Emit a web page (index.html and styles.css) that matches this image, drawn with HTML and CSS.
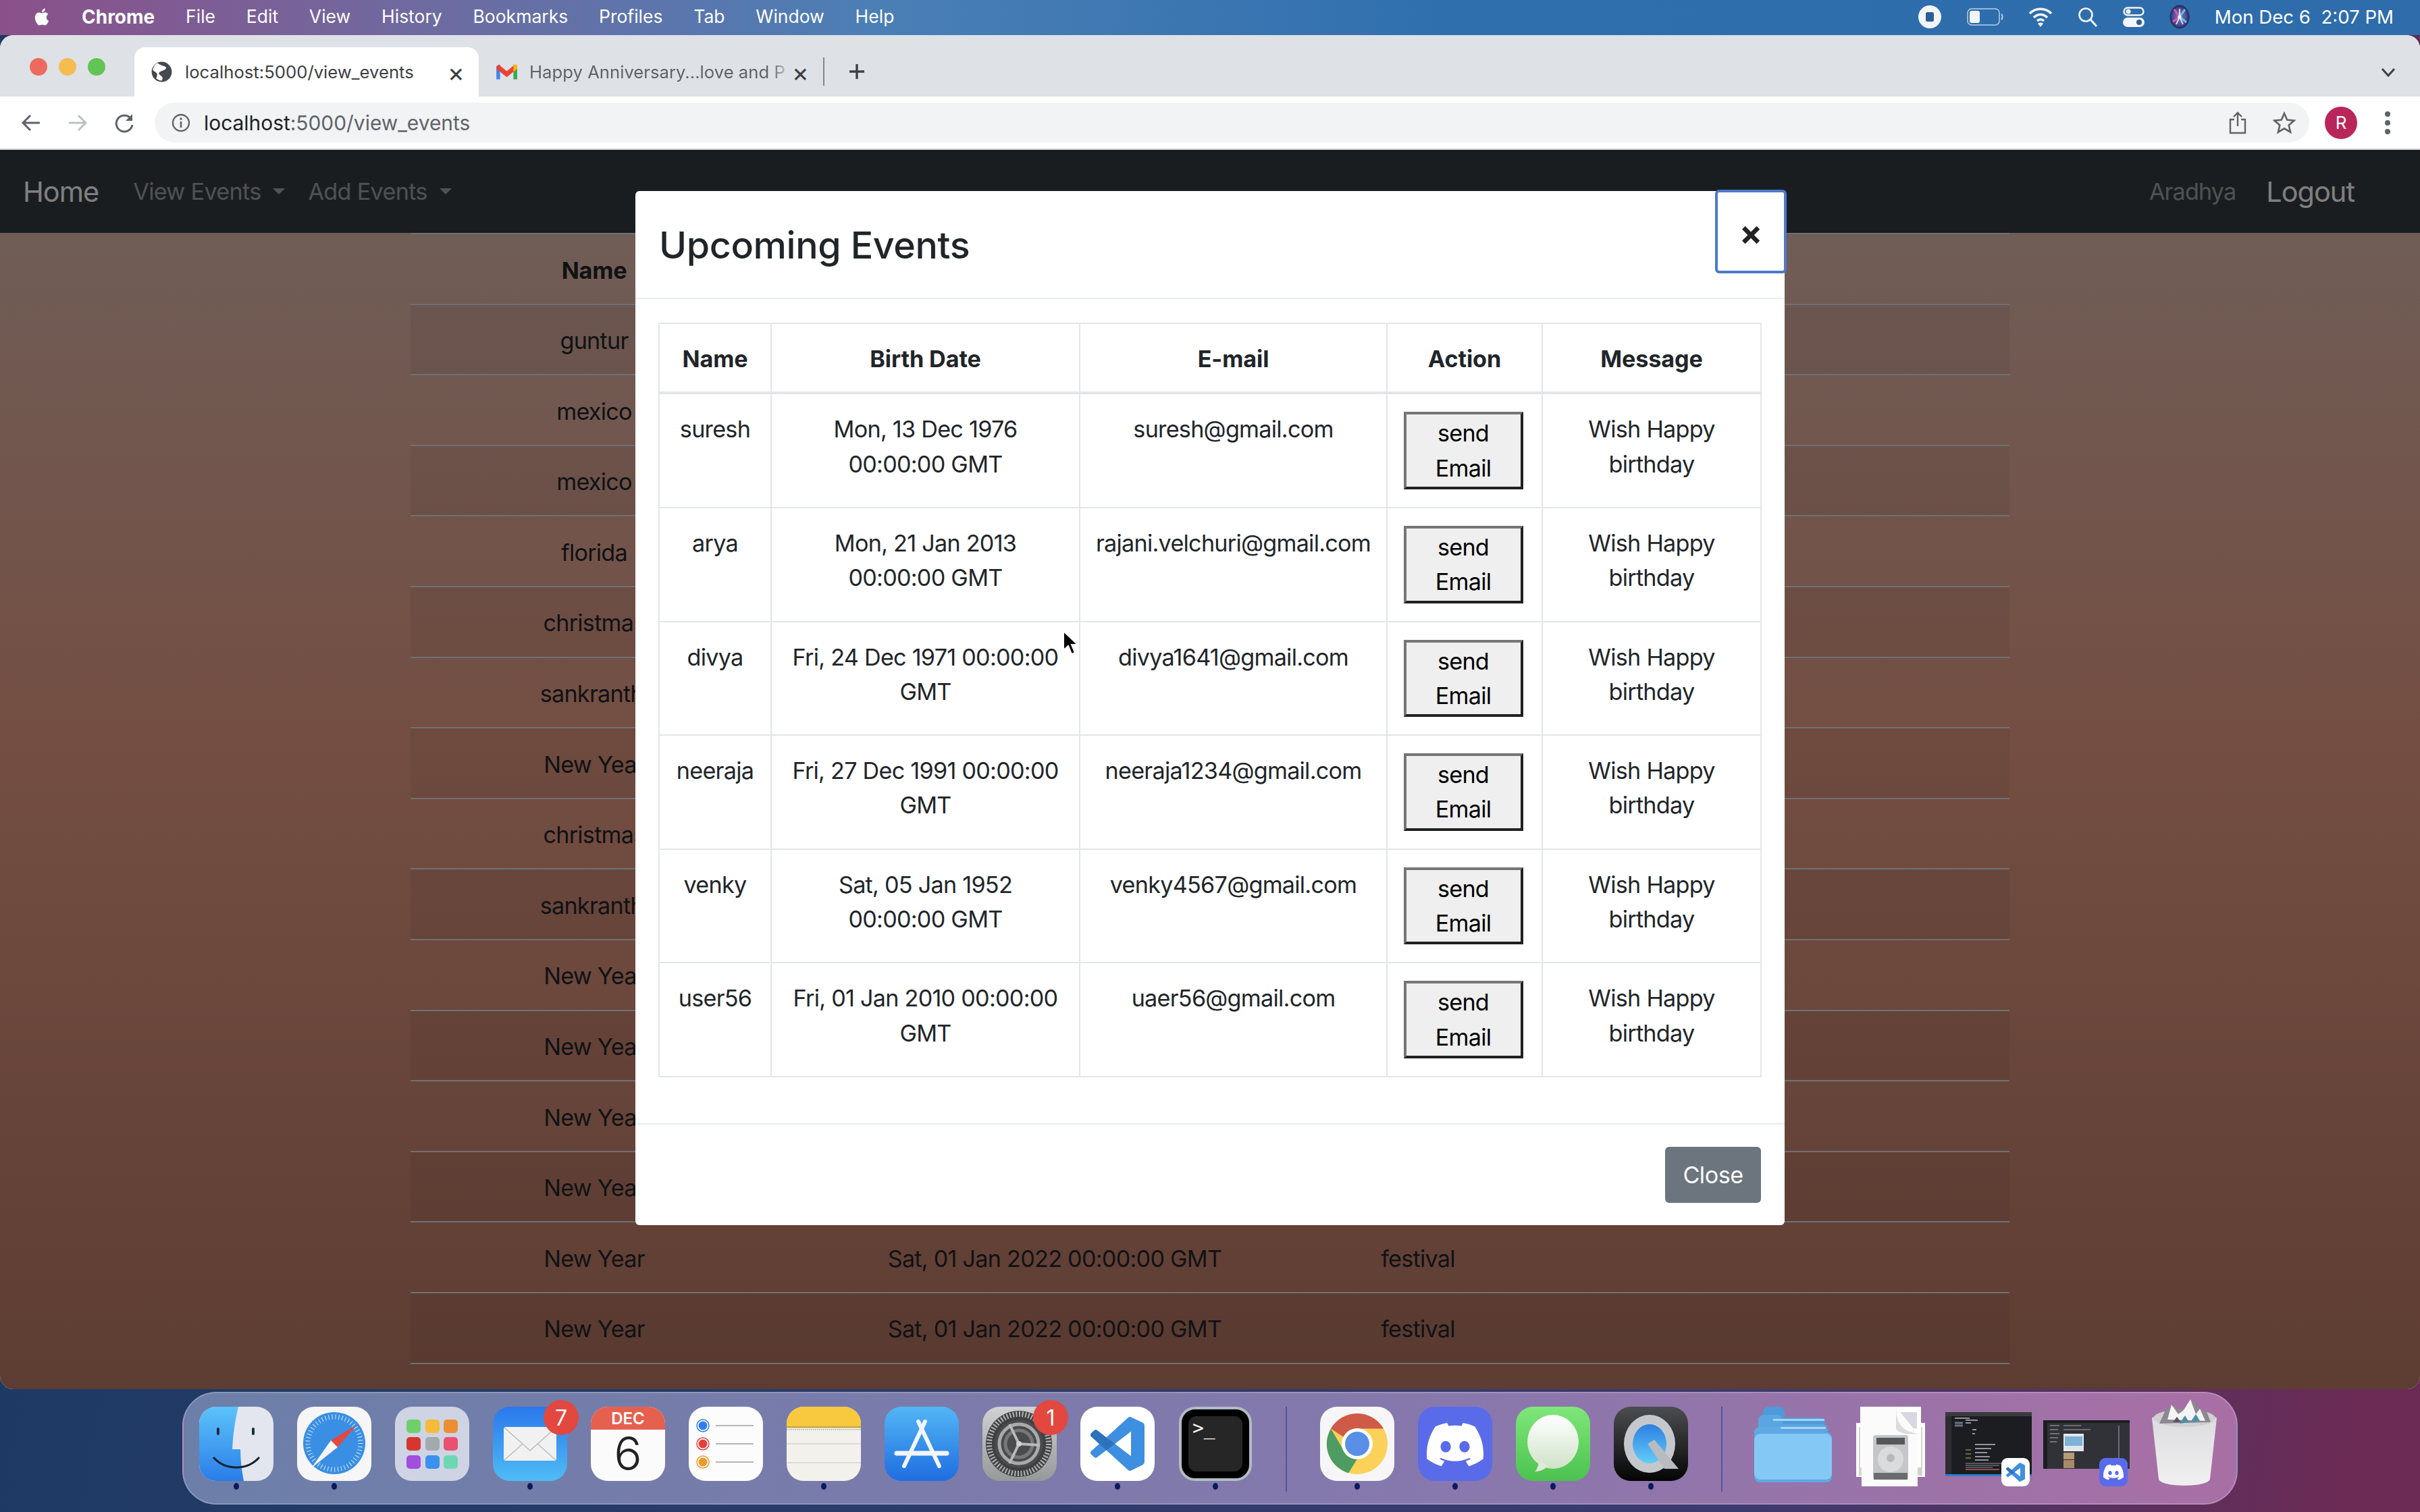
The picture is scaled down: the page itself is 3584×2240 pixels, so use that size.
FILE: index.html
```html
<!DOCTYPE html>
<html lang="en">
<head>
    <meta charset="UTF-8">
    <title>localhost:5000/view_events</title>
    <link rel="stylesheet" href="styles.css">
</head>
<body>
    <!-- shared icons -->
    <svg class="defs" width="0" height="0">
        <symbol id="discord-logo" viewBox="0 0 24 24">
            <path fill="#fff" d="M20.317 4.3698a19.7913 19.7913 0 00-4.8851-1.5152.0741.0741 0 00-.0785.0371c-.211.3753-.4447.8648-.6083 1.2495-1.8447-.2762-3.68-.2762-5.4868 0-.1636-.3933-.4058-.8742-.6177-1.2495a.077.077 0 00-.0785-.037 19.7363 19.7363 0 00-4.8852 1.515.0699.0699 0 00-.0321.0277C.5334 9.0458-.319 13.5799.0992 18.0578a.0824.0824 0 00.0312.0561c2.0528 1.5076 4.0413 2.4228 5.9929 3.0294a.0777.0777 0 00.0842-.0276c.4616-.6304.8731-1.2952 1.226-1.9942a.076.076 0 00-.0416-.1057c-.6528-.2476-1.2743-.5495-1.8722-.8923a.077.077 0 01-.0076-.1277c.1258-.0943.2517-.1923.3718-.2914a.0743.0743 0 01.0776-.0105c3.9278 1.7933 8.18 1.7933 12.0614 0a.0739.0739 0 01.0785.0095c.1202.099.246.1981.3728.2924a.077.077 0 01-.0066.1276 12.2986 12.2986 0 01-1.873.8914.0766.0766 0 00-.0407.1067c.3604.698.7719 1.3628 1.225 1.9932a.076.076 0 00.0842.0286c1.961-.6067 3.9495-1.5219 6.0023-3.0294a.077.077 0 00.0313-.0552c.5004-5.177-.8382-9.6739-3.5485-13.6604a.061.061 0 00-.0312-.0286zM8.02 15.3312c-1.1825 0-2.1569-1.0857-2.1569-2.419 0-1.3332.9555-2.4189 2.157-2.4189 1.2108 0 2.1757 1.0952 2.1568 2.419 0 1.3332-.9555 2.4189-2.1569 2.4189zm7.9748 0c-1.1825 0-2.1569-1.0857-2.1569-2.419 0-1.3332.9554-2.4189 2.1569-2.4189 1.2108 0 2.1757 1.0952 2.1568 2.419 0 1.3332-.946 2.4189-2.1568 2.4189Z"/>
        </symbol>
        <symbol id="code-logo" viewBox="0 0 24 24">
            <path fill="#3f8fe0" d="M23.15 2.587L18.21.21a1.494 1.494 0 0 0-1.705.29l-9.46 8.63-4.12-3.128a.999.999 0 0 0-1.276.057L.327 7.261A1 1 0 0 0 .326 8.74L3.899 12 .326 15.26a1 1 0 0 0 .001 1.479L1.65 17.94a.999.999 0 0 0 1.276.057l4.12-3.128 9.46 8.63a1.492 1.492 0 0 0 1.704.29l4.942-2.377A1.5 1.5 0 0 0 24 20.06V3.939a1.5 1.5 0 0 0-.85-1.352zm-5.146 14.861L10.826 12l7.178-5.448v10.896z"/>
            <path fill="#2a6fb8" d="M7.045 9.13l-4.12-3.128a.999.999 0 0 0-1.276.057L.327 7.261A1 1 0 0 0 .326 8.74L3.899 12l3.146 2.87L10.826 12z" opacity=".9"/>
        </symbol>
    </svg>

    <!-- mac menu bar -->
    <header class="menubar">
        <svg class="apple" viewBox="0 0 24 24"><path fill="#fff" d="M18.71 19.5c-.83 1.24-1.71 2.45-3.05 2.47-1.34.03-1.77-.79-3.29-.79-1.53 0-2 .77-3.27.82-1.31.05-2.3-1.32-3.14-2.53C4.25 17 2.94 12.45 4.7 9.39c.87-1.52 2.43-2.48 4.12-2.51 1.28-.02 2.5.87 3.29.87.78 0 2.26-1.07 3.81-.91.65.03 2.47.26 3.64 1.98-.09.06-2.17 1.28-2.15 3.81.03 3.02 2.65 4.03 2.68 4.04-.03.07-.42 1.44-1.38 2.83M13 3.5c.73-.83 1.94-1.46 2.94-1.5.13 1.17-.34 2.35-1.04 3.19-.69.85-1.83 1.51-2.95 1.42-.15-1.15.41-2.35 1.05-3.11z"/></svg>
        <nav class="menu">
            <span class="menu-app">Chrome</span>
            <span>File</span>
            <span>Edit</span>
            <span>View</span>
            <span>History</span>
            <span>Bookmarks</span>
            <span>Profiles</span>
            <span>Tab</span>
            <span>Window</span>
            <span>Help</span>
        </nav>
        <div class="status">
            <svg width="36" height="36" viewBox="0 0 36 36"><circle cx="18" cy="18" r="17" fill="#f2f5f9"/><rect x="12" y="11" width="12" height="14" rx="2.5" fill="#2b5e94"/></svg>
            <svg width="54" height="26" viewBox="0 0 54 26"><rect x="1" y="1" width="47" height="24" rx="6" fill="none" stroke="#b8cfe6" stroke-width="1.5"/><rect x="4" y="4" width="15" height="18" rx="3" fill="#f2f5f9"/><path d="M51 9c2 1 2 7 0 8" fill="none" stroke="#b8cfe6" stroke-width="2"/></svg>
            <svg width="36" height="30" viewBox="0 0 36 30"><path d="M2 10c9-9 23-9 32 0M8 16c6-6 14-6 20 0M13 21c3-3 7-3 10 0" fill="none" stroke="#f2f5f9" stroke-width="3.5"/><path d="M18 30l-4-5c2-2 6-2 8 0z" fill="#f2f5f9"/></svg>
            <svg width="30" height="30" viewBox="0 0 30 30"><circle cx="12" cy="12" r="9.5" fill="none" stroke="#f2f5f9" stroke-width="2.6"/><path d="M19 19l9 10" stroke="#f2f5f9" stroke-width="3"/></svg>
            <svg width="32" height="30" viewBox="0 0 32 30"><rect x="1.5" y="1.5" width="29" height="11" rx="5.5" fill="none" stroke="#f2f5f9" stroke-width="2.4"/><circle cx="8" cy="7" r="3.6" fill="#f2f5f9"/><rect x="0" y="16" width="32" height="14" rx="7" fill="#f2f5f9"/><circle cx="24" cy="23" r="4" fill="#2b5e94"/></svg>
            <svg width="30" height="36" viewBox="0 0 30 36"><defs><radialGradient id="sr"><stop offset="0" stop-color="#8f6fd0"/><stop offset=".7" stop-color="#4d4a9c"/><stop offset="1" stop-color="#23264a"/></radialGradient></defs><ellipse cx="15" cy="18" rx="14.500" ry="17.500" fill="url(#sr)"/><path d="M15 18L7 7M15 18L5 25" stroke="#d85aa8" stroke-width="3"/><path d="M15 18L23 7M15 18l10 8" stroke="#58c8e0" stroke-width="3"/><path d="M15 18V6M15 18l-5 11M15 18l5 11" stroke="#e6f4ff" stroke-width="1.800"/><circle cx="15" cy="18" r="2.500" fill="#fff"/></svg>
            <span class="clock">Mon Dec 6&nbsp;&nbsp;2:07 PM</span>
        </div>
    </header>

    <!-- browser window -->
    <main class="window">
        <div class="tabstrip">
            <div class="lights">
                <i class="light red"></i>
                <i class="light yellow"></i>
                <i class="light green"></i>
            </div>
            <div class="tab tab-active">
                <svg class="favicon" viewBox="0 0 26 26"><circle cx="13" cy="13" r="12.5" fill="#45484d"/><path d="M8 2c3 3 8 3 10 5s-2 4-5 5-5 3-2 5 4 4 2 7c-2 0-5-1-7-3 2-3 2-6-1-8-2-1-3-2-3-3 1-4 3-7 6-8z" fill="#fff"/></svg>
                <span class="tab-title">localhost:5000/view_events</span>
                <span class="tab-x">×</span>
            </div>
            <div class="tab">
                <svg class="favicon favicon-mail" viewBox="0 0 30 24"><path d="M1 22V5l5-3v20z" fill="#4285f4"/><path d="M29 22V5l-5-3v20z" fill="#34a853"/><path d="M1 5l3-3 11 9 11-9 3 3v3L15 19 1 8z" fill="#ea4335"/><path d="M24 3l5-1v6l-5 4z" fill="#fbbc04"/></svg>
                <span class="tab-title tab-fade">Happy Anniversary...love and P</span>
                <span class="tab-x">×</span>
            </div>
            <i class="tab-divider"></i>
            <svg class="plus" width="28" height="28" viewBox="0 0 28 28"><path d="M14 3v22M3 14h22" stroke="#3c4043" stroke-width="3.4"/></svg>
            <svg class="chevron" width="24" height="16" viewBox="0 0 24 16"><path d="M3 3l9 10 9-10" fill="none" stroke="#3c4043" stroke-width="3"/></svg>
        </div>

        <div class="toolbar">
            <svg class="tool" width="30" height="30" viewBox="0 0 30 30"><path d="M28 15H4M14 4L3 15l11 11" fill="none" stroke="#5f6368" stroke-width="3"/></svg>
            <svg class="tool" width="30" height="30" viewBox="0 0 30 30"><path d="M2 15h24M16 4l11 11-11 11" fill="none" stroke="#bdc1c6" stroke-width="3"/></svg>
            <svg class="tool" width="30" height="30" viewBox="0 0 30 30"><path d="M25 9a12 12 0 1 0 2 9" fill="none" stroke="#5f6368" stroke-width="3"/><path d="M27 2v10H17z" fill="#5f6368"/></svg>
            <div class="omnibox">
                <svg width="28" height="28" viewBox="0 0 28 28"><circle cx="14" cy="14" r="12" fill="none" stroke="#5f6368" stroke-width="2.4"/><path d="M14 12v9" stroke="#5f6368" stroke-width="2.6"/><circle cx="14" cy="8" r="1.8" fill="#5f6368"/></svg>
                <span class="url"><b>localhost</b>:5000/view_events</span>
                <svg class="omni-share" width="26" height="34" viewBox="0 0 26 34"><path d="M8 12H2v20h22V12h-6M13 22V2M7 8l6-6 6 6" fill="none" stroke="#5f6368" stroke-width="2.4"/></svg>
                <svg class="omni-star" width="34" height="34" viewBox="0 0 34 34"><path d="M17 3l4.200 9.600 10.400 1-7.900 6.900 2.400 10.200L17 25.300 7.900 30.700l2.400-10.200-7.900-6.900 10.400-1z" fill="none" stroke="#5f6368" stroke-width="2.600"/></svg>
            </div>
            <span class="avatar">R</span>
            <span class="kebab"><i></i><i></i><i></i></span>
        </div>

        <section class="page">
            <nav class="navbar">
                <a class="brand">Home</a>
                <a class="nav-link caret">View Events</a>
                <a class="nav-link caret">Add Events</a>
                <span class="nav-user">Aradhya</span>
                <a class="nav-logout">Logout</a>
            </nav>

            <table class="events">
                <thead>
                    <tr><th class="c-name">Name</th><th class="c-date"></th><th class="c-kind"></th><th></th></tr>
                </thead>
                <tbody>
                    <tr><td>guntur</td><td></td><td></td><td></td></tr>
                    <tr><td>mexico</td><td></td><td></td><td></td></tr>
                    <tr><td>mexico</td><td></td><td></td><td></td></tr>
                    <tr><td>florida</td><td></td><td></td><td></td></tr>
                    <tr><td>christmas</td><td></td><td></td><td></td></tr>
                    <tr><td>sankranthi</td><td></td><td></td><td></td></tr>
                    <tr><td>New Year</td><td></td><td></td><td></td></tr>
                    <tr><td>christmas</td><td></td><td></td><td></td></tr>
                    <tr><td>sankranthi</td><td></td><td></td><td></td></tr>
                    <tr><td>New Year</td><td></td><td></td><td></td></tr>
                    <tr><td>New Year</td><td></td><td></td><td></td></tr>
                    <tr><td>New Year</td><td></td><td></td><td></td></tr>
                    <tr><td>New Year</td><td></td><td></td><td></td></tr>
                    <tr><td>New Year</td><td>Sat, 01 Jan 2022 00:00:00 GMT</td><td>festival</td><td></td></tr>
                    <tr><td>New Year</td><td>Sat, 01 Jan 2022 00:00:00 GMT</td><td>festival</td><td></td></tr>
                </tbody>
            </table>

            <div class="backdrop"></div>

            <div class="modal">
                <div class="modal-header">
                    <h4>Upcoming Events</h4>
                    <button class="modal-x">×</button>
                </div>
                <div class="modal-body">
                    <table class="upcoming">
                        <thead>
                            <tr><th class="u-name">Name</th><th class="u-date">Birth Date</th><th class="u-mail">E-mail</th><th class="u-act">Action</th><th>Message</th></tr>
                        </thead>
                        <tbody>
                            <tr><td>suresh</td><td>Mon, 13 Dec 1976 00:00:00 GMT</td><td>suresh@gmail.com</td><td><button class="send">send Email</button></td><td>Wish Happy birthday</td></tr>
                            <tr><td>arya</td><td>Mon, 21 Jan 2013 00:00:00 GMT</td><td>rajani.velchuri@gmail.com</td><td><button class="send">send Email</button></td><td>Wish Happy birthday</td></tr>
                            <tr><td>divya</td><td>Fri, 24 Dec 1971 00:00:00 GMT</td><td>divya1641@gmail.com</td><td><button class="send">send Email</button></td><td>Wish Happy birthday</td></tr>
                            <tr><td>neeraja</td><td>Fri, 27 Dec 1991 00:00:00 GMT</td><td>neeraja1234@gmail.com</td><td><button class="send">send Email</button></td><td>Wish Happy birthday</td></tr>
                            <tr><td>venky</td><td>Sat, 05 Jan 1952<br>00:00:00 GMT</td><td>venky4567@gmail.com</td><td><button class="send">send Email</button></td><td>Wish Happy birthday</td></tr>
                            <tr><td>user56</td><td>Fri, 01 Jan 2010 00:00:00 GMT</td><td>uaer56@gmail.com</td><td><button class="send">send Email</button></td><td>Wish Happy birthday</td></tr>
                        </tbody>
                    </table>
                </div>
                <div class="modal-footer">
                    <button class="close-btn">Close</button>
                </div>
            </div>

            <svg class="cursor" width="24" height="38" viewBox="0 0 24 38"><path d="M2 2v28l7-6 5 12 5-2-5-12h9z" fill="#000" stroke="#fff" stroke-width="2"/></svg>
        </section>
    </main>

    <!-- dock -->
    <footer class="dock">
        <div class="dock-item running">
            <svg class="icon" viewBox="0 0 110 110"><defs><linearGradient id="fa" x1="0" y1="0" x2="0" y2="1"><stop offset="0" stop-color="#5cc3fa"/><stop offset="1" stop-color="#2a7de8"/></linearGradient></defs><rect width="110" height="110" rx="25" fill="#e3e6ee"/><path d="M25 0h33c-5 20-8 42-9 63h12c0 16 2 32 5 47H25A25 25 0 0 1 0 85V25A25 25 0 0 1 25 0z" fill="url(#fa)"/><rect x="26" y="31" width="4" height="11" rx="2" fill="#1d2a3a"/><rect x="78" y="31" width="4" height="11" rx="2" fill="#1d2a3a"/><path d="M21 75c18 20 50 20 68 0" fill="none" stroke="#16202c" stroke-width="3"/></svg>
        </div>
        <div class="dock-item running">
            <svg class="icon" viewBox="0 0 110 110"><rect width="110" height="110" rx="25" fill="#f6f6f6"/><circle cx="55" cy="54" r="46" fill="#3a8fe4"/><circle cx="55" cy="54" r="39" fill="none" stroke="#dcecfb" stroke-width="7" stroke-dasharray="1 4"/><path d="M88 27L50 50l10 10z" fill="#e5483c"/><path d="M21 91l39-31-10-10z" fill="#f5f5f5"/></svg>
        </div>
        <div class="dock-item">
            <svg class="icon" viewBox="0 0 110 110"><rect width="110" height="110" rx="25" fill="#ced4e4"/><rect x="17" y="19" width="21" height="20" rx="5" fill="#6fd06a"/><rect x="45" y="19" width="21" height="20" rx="5" fill="#f6bb3a"/><rect x="72" y="19" width="21" height="20" rx="5" fill="#ec8f33"/><rect x="17" y="45" width="21" height="20" rx="5" fill="#d9352f"/><rect x="45" y="45" width="21" height="20" rx="5" fill="#a4a9ad"/><rect x="72" y="45" width="21" height="20" rx="5" fill="#ea5170"/><rect x="17" y="72" width="21" height="20" rx="5" fill="#a14fdc"/><rect x="45" y="72" width="21" height="20" rx="5" fill="#3a91ef"/><rect x="72" y="72" width="21" height="20" rx="5" fill="#6fd6b5"/></svg>
        </div>
        <div class="dock-item running">
            <svg class="icon" viewBox="0 0 110 110"><defs><linearGradient id="ma" x1="0" y1="0" x2="0" y2="1"><stop offset="0" stop-color="#2a78ea"/><stop offset="1" stop-color="#4fbcf6"/></linearGradient></defs><rect width="110" height="110" rx="25" fill="url(#ma)"/><rect x="16" y="30" width="78" height="50" rx="3" fill="#f1f1f1"/><path d="M17 31l38 34 38-34M17 79l27-24M93 79L66 55" fill="none" stroke="#bcbcbc" stroke-width="1.500"/></svg>
            <span class="badge">7</span>
        </div>
        <div class="dock-item">
            <div class="calendar">
                <span class="cal-month">DEC</span>
                <span class="cal-day">6</span>
            </div>
        </div>
        <div class="dock-item">
            <svg class="icon" viewBox="0 0 110 110"><rect width="110" height="110" rx="25" fill="#fcfcfc"/><circle cx="21" cy="28" r="9" fill="#fff" stroke="#2f7cf0" stroke-width="1.500"/><circle cx="21" cy="28" r="6.500" fill="#2f7cf0"/><circle cx="21" cy="55" r="9" fill="#fff" stroke="#e5403a" stroke-width="1.500"/><circle cx="21" cy="55" r="6.500" fill="#e5403a"/><circle cx="21" cy="82" r="9" fill="#fff" stroke="#ef9a2d" stroke-width="1.500"/><circle cx="21" cy="82" r="6.500" fill="#ef9a2d"/><path d="M40 28h56M40 55h56M40 82h56" stroke="#b5b5b5" stroke-width="2"/></svg>
        </div>
        <div class="dock-item running">
            <svg class="icon" viewBox="0 0 110 110"><defs><clipPath id="nc"><rect width="110" height="110" rx="25"/></clipPath></defs><g clip-path="url(#nc)"><rect width="110" height="110" fill="#f3f1ec"/><rect width="110" height="29" fill="#f8c93f"/><rect y="29" width="110" height="2.500" fill="#c5a848"/><path d="M0 55h110M0 83h110" stroke="#d5d3cd" stroke-width="1.500"/><path d="M0 34h110" stroke="#b8b8b8" stroke-width="2" stroke-dasharray="1.500 1.500"/></g></svg>
        </div>
        <div class="dock-item">
            <svg class="icon" viewBox="0 0 110 110"><defs><linearGradient id="aa" x1="0" y1="0" x2="0" y2="1"><stop offset="0" stop-color="#52b6f5"/><stop offset="1" stop-color="#1f6de0"/></linearGradient></defs><rect width="110" height="110" rx="25" fill="url(#aa)"/><path d="M60 22L29 88M50 22l31 66" stroke="#f2f6fb" stroke-width="6" stroke-linecap="round"/><path d="M18 69h74" stroke="#f2f6fb" stroke-width="7" stroke-linecap="round"/></svg>
        </div>
        <div class="dock-item">
            <svg class="icon" viewBox="0 0 110 110"><defs><linearGradient id="sa" x1="0" y1="0" x2="0" y2="1"><stop offset="0" stop-color="#cfd1d2"/><stop offset="1" stop-color="#979899"/></linearGradient></defs><rect width="110" height="110" rx="25" fill="url(#sa)"/><circle cx="54" cy="55" r="49" fill="#3f4042"/><circle cx="54" cy="55" r="44" fill="none" stroke="#b4b5b7" stroke-width="8" stroke-dasharray="2 2.600"/><circle cx="54" cy="55" r="36" fill="#4a4b4d"/><circle cx="54" cy="55" r="29" fill="none" stroke="#a9aaac" stroke-width="5"/><circle cx="54" cy="55" r="20" fill="none" stroke="#77787a" stroke-width="5"/><path d="M54 55L40 26M54 55l31 2M54 55L40 84" stroke="#b9babc" stroke-width="4"/><circle cx="54" cy="55" r="4" fill="#d0d1d2"/></svg>
            <span class="badge">1</span>
        </div>
        <div class="dock-item running">
            <svg class="icon" viewBox="0 0 110 110"><rect width="110" height="110" rx="25" fill="#fff"/><use href="#code-logo" x="15" y="15" width="80" height="80"/></svg>
        </div>
        <div class="dock-item running">
            <div class="terminal"><span class="prompt">&gt;_</span></div>
        </div>
        <i class="dock-sep"></i>
        <div class="dock-item running">
            <svg class="icon" viewBox="0 0 110 110"><rect width="110" height="110" rx="25" fill="#f6f6f6"/><circle cx="55" cy="55" r="45" fill="#fbd15a"/><path d="M55 10a45 45 0 0 1 39 22.500H55A22.500 22.500 0 0 0 35 45L16 32.500A45 45 0 0 1 55 10z" fill="#cf5a48"/><path d="M16 32.500l20 34 19 11-13 20.800A45 45 0 0 1 16 32.500z" fill="#4e9c62"/><circle cx="55" cy="55" r="23" fill="#fff"/><circle cx="55" cy="55" r="18" fill="#5a8fe8"/></svg>
        </div>
        <div class="dock-item running">
            <svg class="icon" viewBox="0 0 110 110"><rect width="110" height="110" rx="25" fill="#5a6bea"/><use href="#discord-logo" x="13" y="14" width="84" height="84"/></svg>
        </div>
        <div class="dock-item running">
            <svg class="icon" viewBox="0 0 110 110"><defs><linearGradient id="ga" x1="0" y1="0" x2="0" y2="1"><stop offset="0" stop-color="#7fe77a"/><stop offset="1" stop-color="#4cc24f"/></linearGradient><linearGradient id="gb" x1="0" y1="0" x2="0" y2="1"><stop offset="0" stop-color="#fff"/><stop offset="1" stop-color="#cfe3c8"/></linearGradient></defs><rect width="110" height="110" rx="25" fill="url(#ga)"/><ellipse cx="55" cy="52" rx="38" ry="40" fill="url(#gb)"/><path d="M34 78c0 8-2 14-6 18 8 0 14-3 20-8z" fill="#dfe9d8"/></svg>
        </div>
        <div class="dock-item running">
            <svg class="icon" viewBox="0 0 110 110"><defs><linearGradient id="qa" x1="0" y1="0" x2="0" y2="1"><stop offset="0" stop-color="#4b4d50"/><stop offset="1" stop-color="#050505"/></linearGradient><linearGradient id="qb" x1="0" y1="0" x2="0" y2="1"><stop offset="0" stop-color="#2c7fe0"/><stop offset="1" stop-color="#63cdf8"/></linearGradient></defs><rect width="110" height="110" rx="25" fill="url(#qa)"/><ellipse cx="53" cy="55" rx="38" ry="43" fill="#c4c8cc"/><ellipse cx="53" cy="55" rx="25" ry="29" fill="url(#qb)"/><path d="M50 55l10-6 36 43-21 0z" fill="#b8bcc0"/></svg>
        </div>
        <i class="dock-sep"></i>
        <div class="dock-item">
            <svg class="icon icon-folder" viewBox="0 0 115 112"><path d="M13 8a8 8 0 0 1 8-8h16a8 8 0 0 1 8 8v8h52a8 8 0 0 1 8 8v20H13z" fill="#4f9ad8"/><path d="M6 20a8 8 0 0 1 8-8h20a8 8 0 0 1 8 8v6h59a8 8 0 0 1 8 8v20H6z" fill="#5aa6e2"/><path d="M28 18h76v3H28zM30 30h76v3H30z" fill="#a8d5f5"/><path d="M0 38a8 8 0 0 1 8-8h30l6 8h63a8 8 0 0 1 8 8v58a8 8 0 0 1-8 8H8a8 8 0 0 1-8-8z" fill="#5fa9e2"/><rect y="40" width="115" height="68" rx="9" fill="#84c8f6"/></svg>
        </div>
        <div class="dock-item">
            <svg class="icon icon-docs" viewBox="0 0 102 118"><rect x="0" y="24" width="102" height="80" fill="#fff"/><rect x="4" y="30" width="94" height="72" fill="#d4d2ce"/><rect x="6" y="0" width="90" height="90" fill="#fff"/><rect x="60" y="8" width="30" height="24" fill="#d8d6e0"/><path d="M7 0h52l32 40v78H8z" fill="#fbfbfb"/><path d="M59 0c0 24 8 36 32 40-20 2-30-2-32-8z" fill="#dcdcdc"/><rect x="25" y="42" width="52" height="66" rx="4" fill="#c4c6c8"/><rect x="30" y="46" width="42" height="10" fill="#55575a"/><circle cx="51" cy="78" r="19" fill="#d9dbdd"/><circle cx="51" cy="76" r="6" fill="#b6b8ba"/><rect x="26" y="98" width="50" height="10" fill="#6a6c6e"/></svg>
        </div>
        <div class="dock-item">
            <div class="thumb-wrap">
                <svg class="thumb" viewBox="0 0 128 95"><rect width="128" height="95" fill="#1c1d20"/><rect width="128" height="6" fill="#3a3b3f"/><rect width="9" height="95" y="6" fill="#2c2d31"/><path d="M14 9h22M30 12h18M30 16h8M40 26h6M40 32h4M44 48h30M44 54h24M44 60h18M44 66h22M44 71h20" stroke="#b8bdc6" stroke-width="1.500"/><path d="M14 16h12M14 20h12" stroke="#6b7280" stroke-width="3"/><path d="M30 56h8M30 62h8M30 68h8" stroke="#c9b36c" stroke-width="1.200"/><path d="M30 76h68M30 79h50M30 82h40" stroke="#8a93a0" stroke-width="1.200"/><path d="M30 85h50" stroke="#c05a55" stroke-width="1.500"/><rect y="92" width="128" height="3" fill="#2a7fd0"/></svg>
                <svg class="mini" viewBox="0 0 42 42"><rect width="42" height="42" rx="9" fill="#fff"/><use href="#code-logo" x="7" y="7" width="28" height="28"/></svg>
            </div>
        </div>
        <div class="dock-item">
            <div class="thumb-wrap thumb-wrap-chat">
                <svg class="thumb thumb-chat" viewBox="0 0 128 72"><rect width="128" height="72" fill="#303237"/><rect width="128" height="4" fill="#1d1e21"/><rect width="6" height="72" fill="#1d1e21"/><path d="M10 8h14M10 14h12M10 20h14M10 26h12M10 32h10" stroke="#85888e" stroke-width="1.500"/><rect x="30" y="20" width="30" height="26" fill="#e0e6ec"/><rect x="32" y="24" width="26" height="14" fill="#7fb0d8"/><rect x="30" y="48" width="16" height="10" fill="#b79a78"/><rect x="30" y="59" width="16" height="12" fill="#a88a68"/><path d="M30 8h26M30 14h40M112 8v60" stroke="#7d8087" stroke-width="1.500"/></svg>
                <svg class="mini mini-chat" viewBox="0 0 42 42"><rect width="42" height="42" rx="9" fill="#5a6bea"/><use href="#discord-logo" x="6" y="6" width="30" height="30"/></svg>
            </div>
        </div>
        <div class="dock-item">
            <svg class="icon icon-trash" viewBox="0 0 98 128"><defs><linearGradient id="ta" x1="0" y1="0" x2="0" y2="1"><stop offset="0" stop-color="#dcdce0"/><stop offset="1" stop-color="#f0f0ef"/></linearGradient></defs><path d="M1 28c0-6 96-6 96 0l-10 90c-2 13-74 13-76 0z" fill="url(#ta)"/><ellipse cx="49" cy="28" rx="46" ry="13" fill="#cfcfd4"/><path d="M12 36l10-22 14-4 4 6 10-4 12-12 8 14 12 4 6 16z" fill="#8c8890"/><path d="M24 30l6-22 10 14 8-6 10-16 8 22 6-8 8 18z" fill="#f4f4f4"/><path d="M42 36l8-12 6 10zM58 34l8-12 6 10z" fill="#4a8fa8"/><path d="M32 34l6-8 6 8z" fill="#5a5660"/></svg>
        </div>
    </footer>
</body>
</html>
```

FILE: styles.css
```css
* {
    box-sizing: border-box;
}

html, body {
    margin: 0;
    height: 100%;
}

body {
    width: 3584px;
    height: 2240px;
    overflow: hidden;
    display: flex;
    flex-direction: column;
    font-family: Inter, "Liberation Sans", sans-serif;
    color: #212529;
    background: linear-gradient(100deg, #1a3a63 0%, #2c3b6a 45%, #3d3a6e 75%, #6b2b55 97%);
}

.defs {
    position: absolute;
}

/* menu bar */
.menubar {
    height: 52px;
    flex: none;
    display: flex;
    align-items: center;
    padding: 0 39px 2px 47px;
    color: #fff;
    font-size: 26.5px;
    background: linear-gradient(90deg, #8b5089 0%, #6f6aa0 17%, #4b7fb6 36%, #2f6fae 60%, #2e6cab 100%);
}

.apple {
    width: 30px;
    height: 34px;
    flex: none;
}

.menu {
    display: flex;
    gap: 45.8px;
    margin-left: 44px;
}

.menu-app {
    font-size: 28px;
    font-weight: 700;
}

.status {
    margin-left: auto;
    display: flex;
    align-items: center;
    gap: 37px;
}

.clock {
    font-size: 27.6px;
    white-space: nowrap;
}

/* browser window */
.window {
    height: 2006px;
    flex: none;
    display: flex;
    flex-direction: column;
    overflow: hidden;
    border-radius: 20px;
    background: #fff;
}

.tabstrip {
    height: 91px;
    flex: none;
    display: flex;
    align-items: flex-end;
    background: #dee1e6;
}

.lights {
    display: flex;
    gap: 17px;
    margin: 0 43px 31px 44px;
}

.light {
    width: 26px;
    height: 26px;
    border-radius: 50%;
}

.red { background: #ee6a5f; }
.yellow { background: #f5bd4f; }
.green { background: #61c454; }

.tab {
    width: 510px;
    height: 73px;
    display: flex;
    align-items: center;
    padding: 0 21px 0 25px;
    font-size: 25.7px;
    color: #5f6368;
}

.tab-active {
    background: #fff;
    border-radius: 16px 16px 0 0;
    color: #3c4043;
}

.favicon {
    width: 31px;
    height: 31px;
    flex: none;
    margin-right: 19px;
}

.favicon-mail {
    width: 33px;
    margin-right: 17px;
}

.tab-title {
    flex: 1;
    white-space: nowrap;
}

.tab-fade {
    -webkit-mask-image: linear-gradient(90deg, #000 92%, transparent 100%);
    mask-image: linear-gradient(90deg, #000 92%, transparent 100%);
}

.tab-x {
    flex: none;
    font-size: 38px;
    line-height: 1;
    color: #3c4043;
}

.tab-divider {
    width: 2px;
    height: 42px;
    margin-bottom: 16px;
    background: #84878c;
}

.plus {
    margin: 0 0 23px 34px;
}

.chevron {
    margin: 0 35px 28px auto;
}

.toolbar {
    height: 79px;
    flex: none;
    display: flex;
    align-items: center;
    padding-left: 31px;
    border-bottom: 2px solid #d5d7da;
    background: #fff;
}

.tool {
    margin-right: 39px;
}

.omnibox {
    width: 3191px;
    height: 59px;
    margin-left: -9px;
    display: flex;
    align-items: center;
    padding-left: 25px;
    border-radius: 30px;
    background: #f1f3f4;
}

.url {
    margin-left: 20px;
    font-size: 29.9px;
    color: #5f6368;
}

.url b {
    font-weight: 400;
    color: #202124;
}

.omni-share {
    margin-left: auto;
}

.omni-star {
    margin: 0 20px 0 39px;
}

.avatar {
    width: 48px;
    height: 48px;
    margin-left: 23px;
    border-radius: 50%;
    display: flex;
    align-items: center;
    justify-content: center;
    font-size: 26px;
    color: #fff;
    background: #b9265a;
}

.kebab {
    display: flex;
    flex-direction: column;
    gap: 5px;
    margin-left: 41px;
}

.kebab i {
    width: 8px;
    height: 8px;
    border-radius: 50%;
    background: #5f6368;
}

/* page under the modal */
.page {
    position: relative;
    flex: 1;
    overflow: hidden;
    background: linear-gradient(180deg, #dfc0b4 0%, #e89c85 48%, #bb7a66 100%);
}

.navbar {
    height: 123px;
    display: flex;
    align-items: center;
    padding: 0 34px;
    background: #343a40;
    color: rgba(255, 255, 255, .55);
    font-size: 34.2px;
    letter-spacing: -.7px;
}

.brand {
    margin-right: 51px;
    font-size: 41.5px;
    letter-spacing: -1px;
    color: #fff;
}

.nav-link {
    margin-right: 70px;
}

.caret {
    position: relative;
}

.caret::after {
    content: "";
    position: absolute;
    right: -36px;
    top: 50%;
    margin-top: -5px;
    border-top: 9px solid rgba(255, 255, 255, .55);
    border-left: 9px solid transparent;
    border-right: 9px solid transparent;
}

.nav-user {
    margin-left: auto;
    margin-right: 45px;
    letter-spacing: -.9px;
}

.nav-logout {
    margin-right: 63px;
    font-size: 41.5px;
    letter-spacing: -1px;
    color: #fff;
}

.events {
    width: 2368px;
    margin-left: 608px;
    table-layout: fixed;
    border-collapse: collapse;
    font-size: 34.2px;
    line-height: 51.2px;
    letter-spacing: -.75px;
    text-align: center;
    color: #212529;
}

.events th,
.events td {
    padding: 27.5px 0 23.9px;
    border-top: 2px solid #dee2e6;
}

.events th {
    border-bottom: 2px solid #dee2e6;
    font-weight: 700;
    letter-spacing: -.2px;
}

.events tbody tr:last-child td {
    border-bottom: 2px solid #dee2e6;
}

.events tbody tr:nth-child(odd) {
    background: rgba(0, 0, 0, .05);
}

.c-name { width: 544px; }
.c-date { width: 820px; }
.c-kind { width: 256px; }

.backdrop {
    position: absolute;
    inset: 0;
    background: rgba(0, 0, 0, .5);
}

/* modal */
.modal {
    position: absolute;
    top: 61px;
    left: 941px;
    width: 1702px;
    height: 1532px;
    display: flex;
    flex-direction: column;
    background: #fff;
    border-radius: 6px;
}

.modal-header {
    height: 160px;
    flex: none;
    display: flex;
    justify-content: space-between;
    padding: 41px 0 0 35px;
    border-bottom: 2px solid #e9ecef;
}

.modal-header h4 {
    margin: 0;
    font-size: 55.6px;
    line-height: 77px;
    font-weight: 500;
    letter-spacing: -.4px;
}

.modal-x {
    width: 106px;
    height: 124px;
    margin: -43px -3px 0 0;
    padding: 2px 0 0;
    border: 4px solid #4d79c9;
    border-radius: 6px;
    background: #fff;
    font-family: inherit;
    font-size: 51px;
    font-weight: 700;
    color: #222;
}

.modal-body {
    flex: 1;
    padding: 35px 34px 0;
}

.upcoming {
    width: 1634px;
    table-layout: fixed;
    border-collapse: collapse;
    font-size: 34.2px;
    line-height: 51.2px;
    letter-spacing: -.75px;
    text-align: center;
}

.upcoming th,
.upcoming td {
    padding: 26px;
    border: 2px solid #e2e5e9;
    vertical-align: top;
}

.upcoming th {
    padding: 25.6px 0 23.6px;
    border-bottom-width: 4px;
    font-weight: 700;
    letter-spacing: -.1px;
}

.u-name { width: 166px; }
.u-date { width: 457px; }
.u-mail { width: 455px; }
.u-act { width: 230px; }

.upcoming td {
    padding-left: 22px;
    padding-right: 22px;
}

.upcoming td:nth-child(2) {
    padding-left: 25px;
    padding-right: 25px;
}

.upcoming td:nth-child(4) {
    padding-left: 20px;
    padding-right: 24px;
}

.send {
    display: block;
    width: 177px;
    margin: 0 auto;
    padding: 2.1px 12px;
    border: 4.3px outset #767676;
    background: #efefef;
    font: inherit;
    letter-spacing: inherit;
    color: #000;
}

.modal-footer {
    height: 151px;
    flex: none;
    display: flex;
    justify-content: flex-end;
    align-items: center;
    padding: 0 35px;
    border-top: 2px solid #e9ecef;
}

.close-btn {
    width: 142px;
    height: 83px;
    border: 0;
    border-radius: 6px;
    background: #6c757d;
    font: inherit;
    font-size: 34.2px;
    letter-spacing: -.5px;
    color: #fff;
}

.cursor {
    position: absolute;
    top: 711px;
    left: 1573px;
}

/* dock */
.dock {
    height: 167px;
    flex: none;
    align-self: flex-start;
    display: flex;
    gap: 35px;
    margin: 4px 0 0 270px;
    padding: 0 22px 0 23px;
    border: 2px solid rgba(255, 255, 255, .2);
    border-radius: 50px;
    background: linear-gradient(90deg, #6c7fa9 0%, #7a7bab 35%, #8678ad 60%, #a96fa5 100%);
}

.dock-item {
    position: relative;
    width: 110px;
    height: 165px;
    padding-top: 20px;
    display: flex;
    justify-content: center;
}

.dock-item.running::after {
    content: "";
    position: absolute;
    left: 51px;
    top: 133px;
    width: 8px;
    height: 10px;
    border-radius: 50%;
    background: #0b1a5c;
}

.icon {
    width: 110px;
    height: 110px;
    flex: none;
}

.icon-folder {
    width: 115px;
    height: 112px;
}

.icon-docs {
    width: 102px;
    height: 118px;
}

.icon-trash {
    width: 98px;
    height: 128px;
    margin-top: -11px;
}

.dock-sep {
    width: 2px;
    height: 126px;
    margin: 20px 14px 0;
    background: #56559a;
}

.badge {
    position: absolute;
    top: 10px;
    right: -17px;
    width: 52px;
    height: 52px;
    border-radius: 50%;
    display: flex;
    align-items: center;
    justify-content: center;
    font-size: 32px;
    color: #fff;
    background: #e2483f;
}

.calendar {
    width: 110px;
    height: 110px;
    flex: none;
    display: flex;
    flex-direction: column;
    align-items: center;
    border-radius: 25px;
    background: #fbfbfb;
}

.cal-month {
    width: 100%;
    height: 34px;
    border-radius: 25px 25px 0 0;
    text-align: center;
    font-size: 24px;
    line-height: 36px;
    font-weight: 600;
    color: #fff;
    background: #e5604f;
}

.cal-day {
    font-size: 69px;
    line-height: 70px;
    font-weight: 300;
    color: #222;
}

.terminal {
    width: 108px;
    height: 110px;
    flex: none;
    padding: 10px;
    border: 4px solid #b3bcc4;
    border-radius: 24px;
    background: #000;
}

.prompt {
    display: block;
    height: 100%;
    padding: 2px 6px;
    border-radius: 12px;
    font-family: "DejaVu Sans Mono", monospace;
    font-size: 28px;
    line-height: 32px;
    color: #fff;
    background: #262626;
}

.thumb-wrap {
    position: relative;
    flex: none;
    width: 128px;
    height: 95px;
    margin-top: 8px;
}

.thumb-wrap-chat {
    height: 72px;
    margin-top: 20px;
}

.thumb {
    display: block;
    width: 128px;
    height: 95px;
}

.thumb-chat {
    height: 72px;
}

.mini {
    position: absolute;
    right: 3px;
    top: 68px;
    width: 42px;
    height: 42px;
}

.mini-chat {
    top: 56px;
}
```
